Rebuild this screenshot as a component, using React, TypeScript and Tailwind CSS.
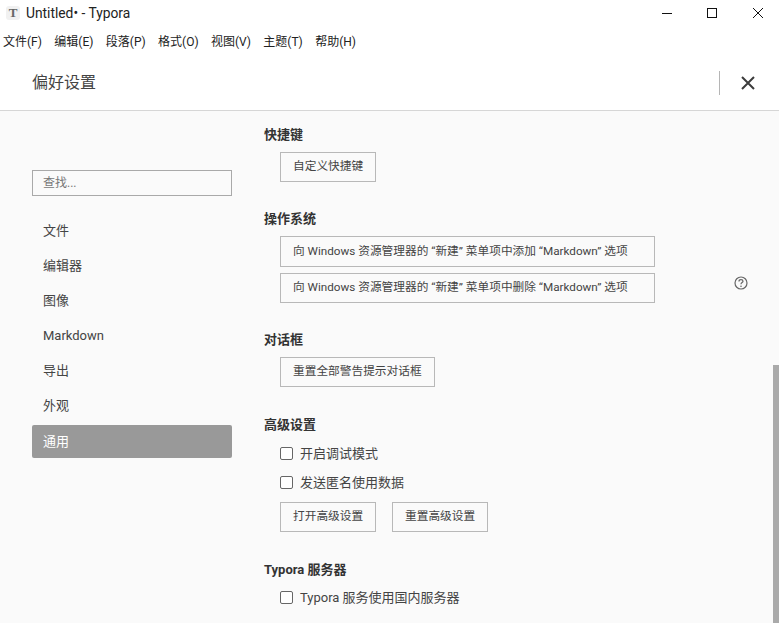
const FONT = "font-['Roboto','Noto_Sans_CJK_SC',sans-serif]";

const menus = ['文件(F)', '编辑(E)', '段落(P)', '格式(O)', '视图(V)', '主题(T)', '帮助(H)'];
const navItems = ['文件', '编辑器', '图像', 'Markdown', '导出', '外观'];

function Btn({ children, className = '' }: { children: React.ReactNode; className?: string }) {
    return (
        <button className={`h-[30px] border border-[#b8b8b8] pl-[12px] text-left text-[11.7px] leading-none text-[#444] whitespace-nowrap ${className}`}>
            {children}
        </button>
    );
}

function Check({ label }: { label: string }) {
    return (
        <label className="flex h-[29px] items-center gap-[7px] pl-4 text-[13px] text-[#444]">
            <span className="h-[13px] w-[13px] rounded-[2px] border border-[#666] bg-white" />
            {label}
        </label>
    );
}

function Heading({ children, className = '' }: { children: React.ReactNode; className?: string }) {
    return <h3 className={`text-[13px] leading-[18px] font-bold text-[#333] ${className}`}>{children}</h3>;
}

export default function App() {
    return (
        <div className={`${FONT} flex h-[623px] w-[779px] flex-col overflow-hidden bg-white`}>
            {/* Title bar */}
            <div className="flex h-[25px] shrink-0 items-center pl-[6px]">
                <div className="flex h-[14px] w-[14px] items-center justify-center rounded-[3px] bg-[#f1f1f1] font-['Liberation_Serif',serif] text-[13px] font-bold text-[#666]">
                    T
                </div>
                <span className="ml-[6px] pt-[1px] text-[13.8px] text-[#222]">Untitled• - Typora</span>
                <div className="ml-auto flex items-center pr-[16px]">
                    <svg width="10" height="10" viewBox="0 0 10 10" className="mr-[35px]">
                        <path d="M0 5.5H10" stroke="#111" strokeWidth="1" />
                    </svg>
                    <svg width="10" height="10" viewBox="0 0 10 10" className="mr-[36px]">
                        <rect x="0.5" y="0.5" width="9" height="9" fill="none" stroke="#111" strokeWidth="1" />
                    </svg>
                    <svg width="10" height="10" viewBox="0 0 10 10">
                        <path d="M0 0L10 10M10 0L0 10" stroke="#111" strokeWidth="1" />
                    </svg>
                </div>
            </div>

            {/* Menu bar */}
            <div className="flex h-[30px] shrink-0 items-start gap-[12.4px] pl-[3px] pt-[9px] text-[12px] leading-4 text-[#222]">
                {menus.map((m) => (
                    <span key={m}>{m}</span>
                ))}
            </div>

            {/* Preferences header */}
            <div className="flex h-[56px] shrink-0 items-center border-b border-[#d6d6d6] pl-[32px]">
                <span className="text-[16px] text-[#444]">偏好设置</span>
                <div className="ml-auto mr-[20px] h-[24px] w-px bg-[#b5b5b5]" />
                <svg width="16" height="16" viewBox="0 0 16 16" className="mr-[23px]">
                    <path d="M2 2L14 14M14 2L2 14" stroke="#3c3c3c" strokeWidth="2" />
                </svg>
            </div>

            {/* Body */}
            <div className="relative flex min-h-0 flex-1 bg-[#fafafa]">
                <aside className="w-[264px] shrink-0 pl-[32px] pt-[59px]">
                    <div className="flex h-[26px] w-[200px] items-center border border-[#a9a9a9] px-[10px] text-[12px] text-[#777]">
                        查找...
                    </div>
                    <nav className="mt-[17px] w-[200px]">
                        {navItems.map((n) => (
                            <div key={n} className="flex h-[35px] items-center pl-[11px] text-[13px] text-[#444]">
                                {n}
                            </div>
                        ))}
                        <div className="mt-[2px] flex h-[33px] items-center rounded-[2px] bg-[#999] pl-[11px] text-[13px] text-white">
                            通用
                        </div>
                    </nav>
                </aside>

                <main className="relative flex-1 pt-[15px]">
                    <Heading>快捷键</Heading>
                    <div className="mt-[8px] pl-4">
                        <Btn className="w-[96px]">自定义快捷键</Btn>
                    </div>

                    <Heading className="mt-[28px]">操作系统</Heading>
                    <div className="mt-[8px] flex flex-col gap-[6px] pl-4">
                        <Btn className="h-[31px] w-[375px]">向 Windows 资源管理器的 “新建” 菜单项中添加 “Markdown” 选项</Btn>
                        <Btn className="w-[375px]">向 Windows 资源管理器的 “新建” 菜单项中删除 “Markdown” 选项</Btn>
                    </div>

                    <Heading className="mt-[28px]">对话框</Heading>
                    <div className="mt-[8px] pl-4">
                        <Btn className="w-[155px]">重置全部警告提示对话框</Btn>
                    </div>

                    <Heading className="mt-[29px]">高级设置</Heading>
                    <div className="mt-[5px]">
                        <Check label="开启调试模式" />
                        <Check label="发送匿名使用数据" />
                    </div>
                    <div className="mt-[5px] flex gap-4 pl-4">
                        <Btn className="w-[96px]">打开高级设置</Btn>
                        <Btn className="w-[96px]">重置高级设置</Btn>
                    </div>

                    <Heading className="mt-[29px]">Typora 服务器</Heading>
                    <div className="mt-[4px]">
                        <Check label="Typora 服务使用国内服务器" />
                    </div>

                    {/* help icon */}
                    <svg width="14" height="14" viewBox="0 0 14 14" className="absolute left-[470px] top-[165px]">
                        <circle cx="7" cy="7" r="6" fill="none" stroke="#666" strokeWidth="1.2" />
                        <path d="M5 5.4C5 4.2 6 3.6 7 3.6C8 3.6 9 4.2 9 5.3C9 6.6 7 6.6 7 8.2" fill="none" stroke="#666" strokeWidth="1.2" />
                        <circle cx="7" cy="10.2" r="0.8" fill="#666" />
                    </svg>
                </main>

                {/* scrollbar thumb */}
                <div className="absolute bottom-0 right-0 top-[254px] w-[6px] bg-[#aaa]" />
            </div>
        </div>
    );
}
